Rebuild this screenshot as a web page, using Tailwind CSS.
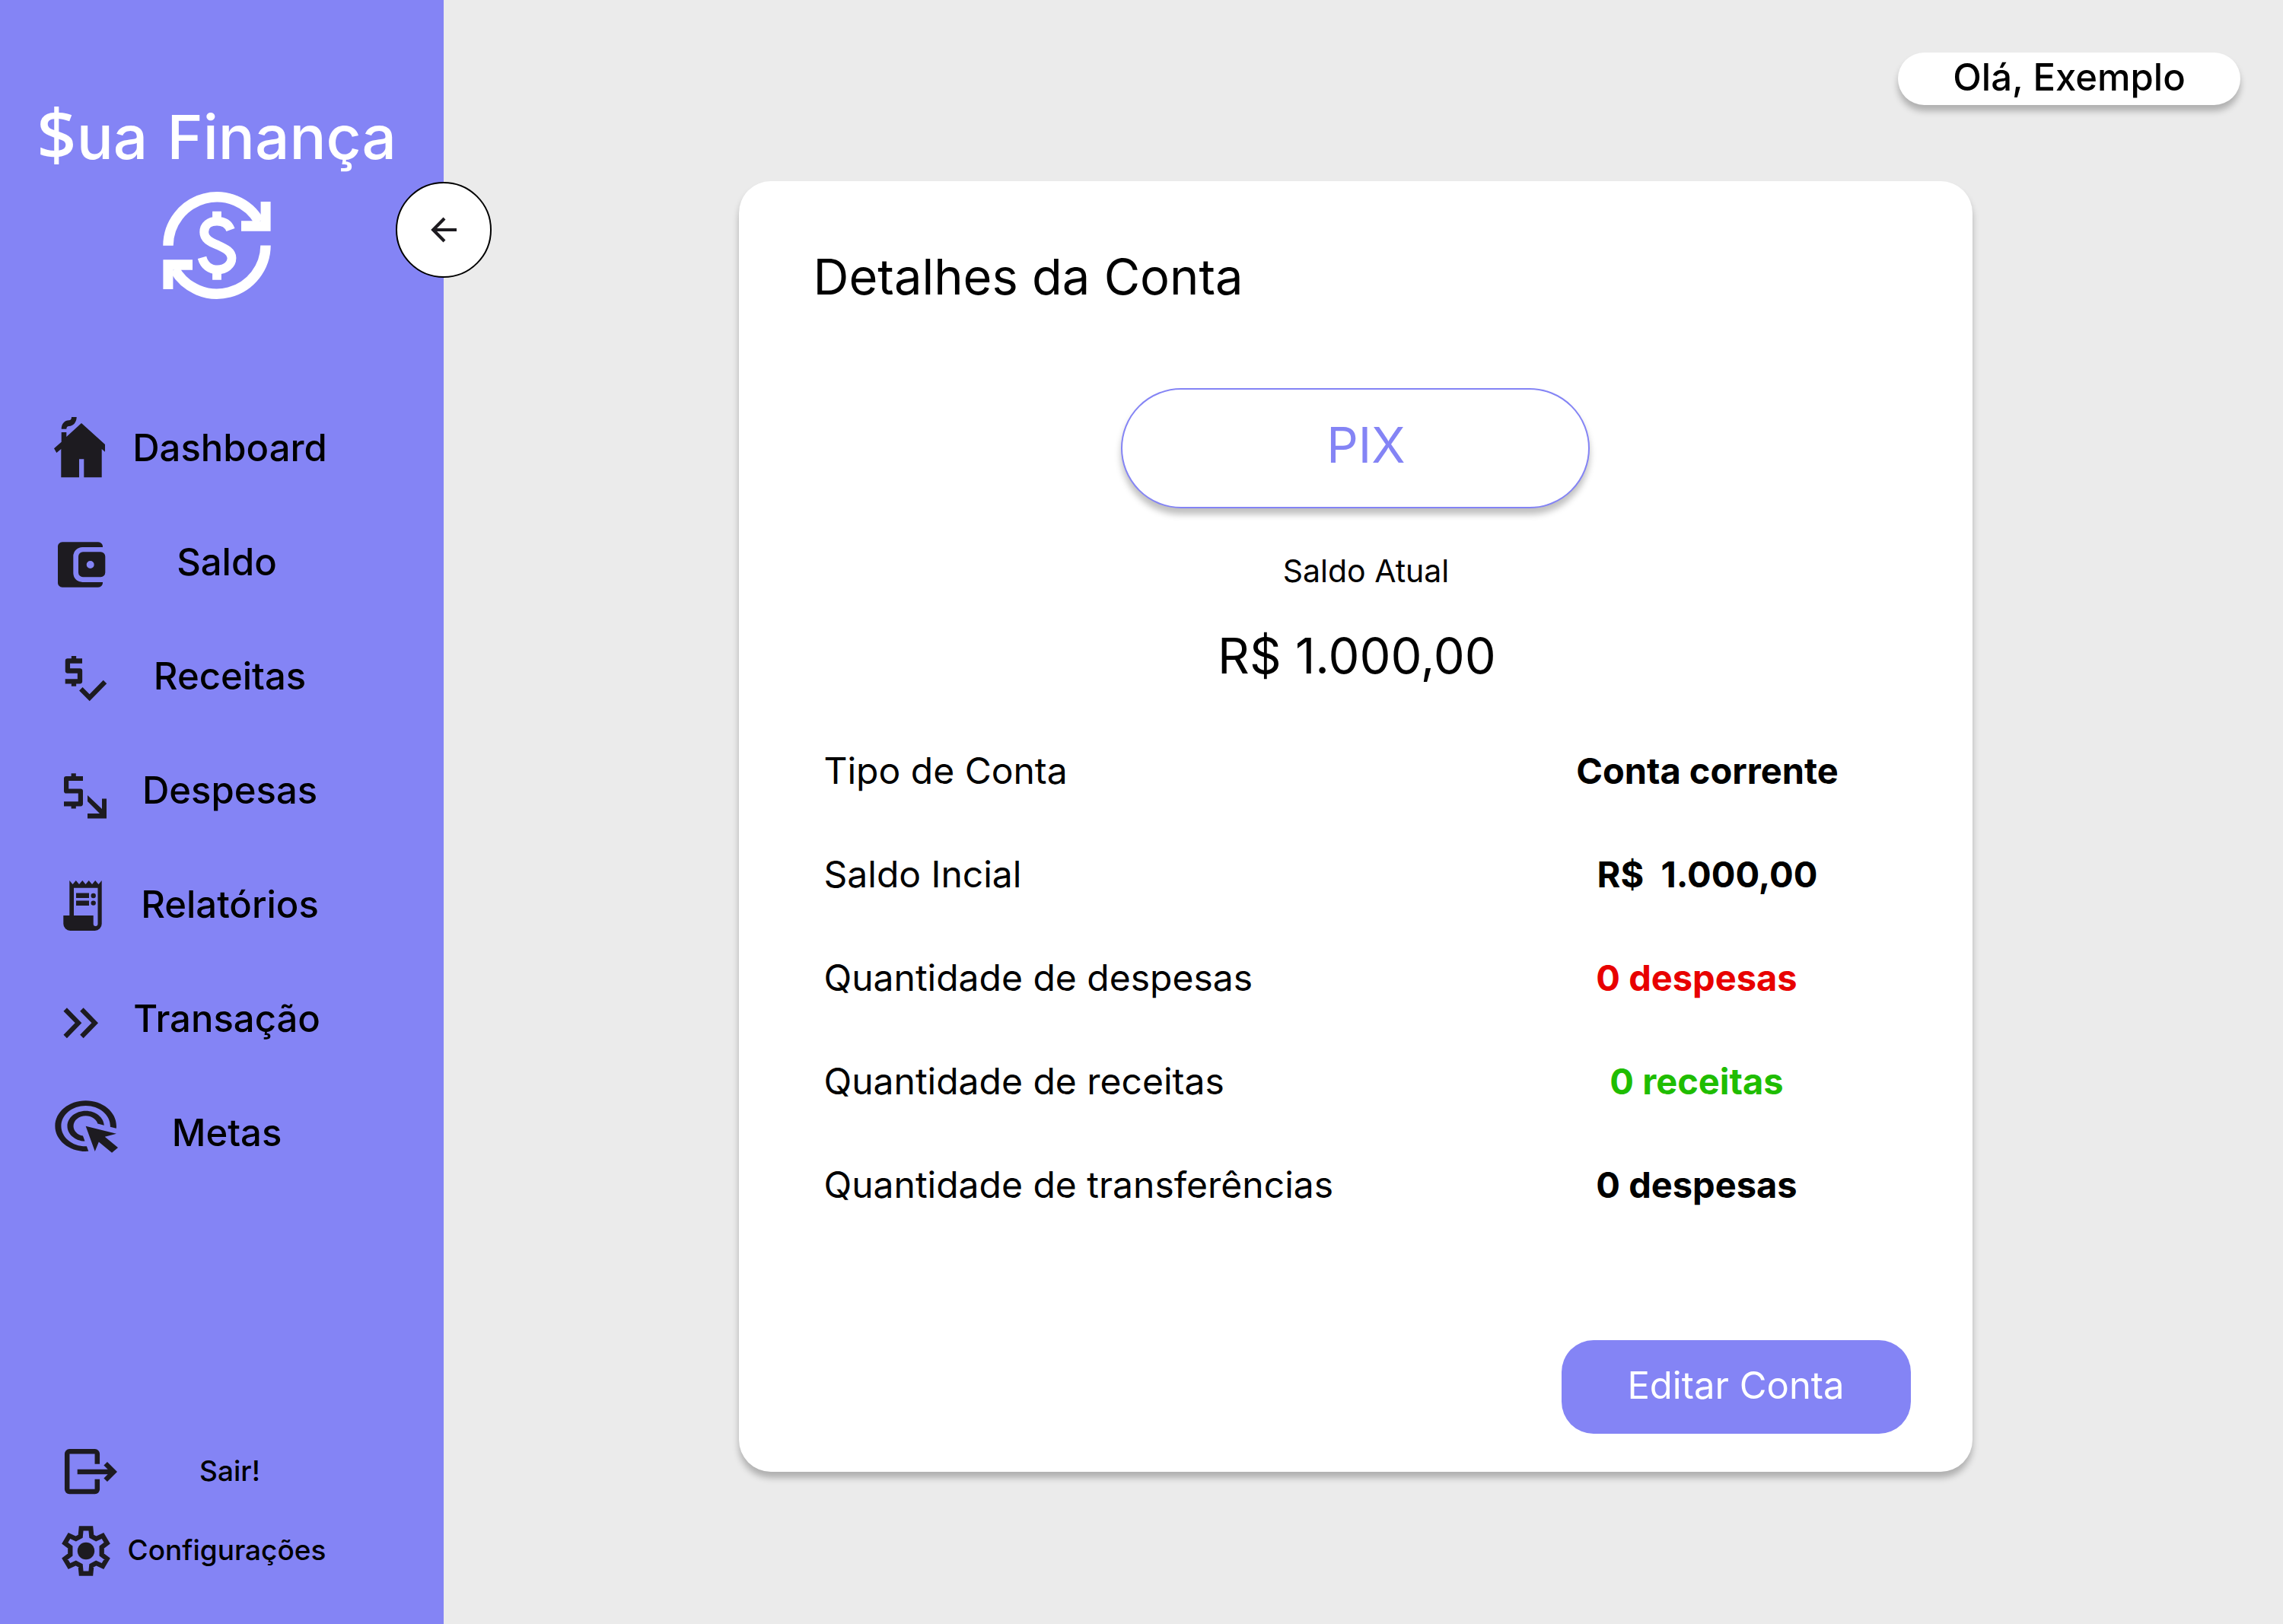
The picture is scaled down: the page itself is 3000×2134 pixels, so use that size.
<!DOCTYPE html>
<html lang="pt-BR">
<head>
<meta charset="utf-8">
<meta name="viewport" content="width=device-width, initial-scale=1">
<title>Sua Finança</title>
<script src="https://cdn.jsdelivr.net/npm/@tailwindcss/browser@4"></script>
</head>
<body class="flex min-h-screen bg-[#ebebeb] font-['Inter',sans-serif] text-black">

<aside class="relative flex w-[583px] shrink-0 flex-col bg-[#8484f5] pb-[58px] pt-[132px]">
  <div class="flex flex-col items-center pr-[14px] text-white">
    <p class="flex h-24 items-center whitespace-nowrap text-[80px] font-medium leading-[96px]"><span class="pb-2 font-['Noto_Sans',sans-serif] text-[92px] leading-[96px]">$</span><span>ua <span class="ml-1">Finança</span></span></p>
    <svg class="mt-6 size-[142px]" viewBox="0 0 142 142" fill="none" stroke="currentColor" aria-hidden="true">
      <g stroke-width="13.5"><path d="M7 70.7A64 64 0 0 1 126.5 39"/><path d="M135 70.5A64 64 0 0 1 15.5 102"/></g>
      <path d="M128.6 13h13v38.7H103V38.3h25.6zM13.4 128H.4V89.3H39v13.4H13.4z" fill="currentColor" stroke="none"/>
      <path stroke-width="11.8" d="M89 50C86 42 79 38.7 71 38.7C61 38.7 54.2 44 54.2 53C54.2 62 62 66 72 70C83 75 90.5 79 90.5 87C90.5 96 82 102.5 72 102.5C62 102.5 54.5 97 51.5 86.3M71 25.7V37M71 104V115.7"/>
    </svg>
  </div>

  <button type="button" aria-label="Recolher menu" class="absolute -right-[63px] top-[239px] flex size-[126px] items-center justify-center rounded-full border-2 border-black bg-white text-[#1d1b20]">
    <svg class="size-[34px]" viewBox="0 0 34 34" fill="none" stroke="currentColor" stroke-width="4.2" aria-hidden="true"><path d="M34 17H4M18 2L3.2 17L18 32"/></svg>
  </button>

  <nav class="mt-[149px] flex flex-col gap-[60px] pl-[68px] text-[49px] font-medium leading-[60px]">
    <a href="#" class="flex h-[90px] items-center">
      <svg class="h-[90px] w-[90px] shrink-0" viewBox="0 0 90 90" fill="#1d1b20" aria-hidden="true"><path d="M12.7 20.7C12.7 14 17 9.3 22.7 9.3C25 9.3 26 7.5 26 5H32.7C32.7 12 28 17 22.7 17C20.5 17 19.3 18.5 19.3 20.7ZM12.7 25H19.3V31L39 13L70 41V50.7L65.7 47V84.3H42.3V60.3H36V84.3H12.3V47L6.3 52L3 46.3L12.7 37.7Z"/></svg>
      <span class="w-72 pt-0.5 text-center">Dashboard</span>
    </a>
    <a href="#" class="flex h-[90px] items-center">
      <svg class="h-[90px] w-[90px] shrink-0" viewBox="0 0 90 90" fill="#1d1b20" fill-rule="evenodd" aria-hidden="true"><path d="M14 19.3H61a6 6 0 0 1 6 6.7H40.3a12 12 0 0 0-12 12v22a12 12 0 0 0 12 12H67a6 6 0 0 1-6 6.7H14a6 6 0 0 1-6-6.7V26a6 6 0 0 1 6-6.7z"/><path d="M41 32.3H64.3a6 6 0 0 1 6 6V59.3a6 6 0 0 1-6 6H41a6 6 0 0 1-6-6V38.3a6 6 0 0 1 6-6zM50.7 44a5 5 0 1 0 0 10a5 5 0 1 0 0-10z"/></svg>
      <span class="w-72 pr-2 pt-0.5 text-center">Saldo</span>
    </a>
    <a href="#" class="flex h-[90px] items-center">
      <svg class="h-[90px] w-[90px] shrink-0" viewBox="0 0 90 90" fill="none" stroke="#1d1b20" stroke-width="6.3" aria-hidden="true"><path stroke-linejoin="round" d="M40 25.5H20.9V38.5H37V52.3H17.7M29 19V25M29 53V58.7"/><path d="M38.3 62.3L49.7 73.7L70 53"/></svg>
      <span class="w-72 pt-0.5 text-center">Receitas</span>
    </a>
    <a href="#" class="flex h-[90px] items-center">
      <svg class="h-[90px] w-[90px] shrink-0" viewBox="0 0 90 90" fill="none" stroke="#1d1b20" stroke-width="6.2" aria-hidden="true"><path stroke-linejoin="round" d="M41 30H19.1V46.5H37.9V63.3H16M28.7 23.3V30M28.7 64V69.6"/><path stroke="none" fill="#1d1b20" d="M47 52L66 70V56.6h6v26H47V76H63L47 60Z"/></svg>
      <span class="w-72 pt-0.5 text-center">Despesas</span>
    </a>
    <a href="#" class="flex h-[90px] items-center">
      <svg class="h-[90px] w-[90px] shrink-0" viewBox="0 0 90 90" fill="#1d1b20" fill-rule="evenodd" aria-hidden="true"><path d="M23.3 14L27.5 19L31.8 14L36 19L40.3 14L44.5 19L48.7 14L53 19L57.2 14L61.5 19L65.7 14V71a9 9 0 0 1-9 9H24.3a9 9 0 0 1-9-9V60H23.3ZM29 23.7V60H54.7V71a2.9 2.9 0 0 0 5.8 0V23.7Z"/><path d="M32 30.5H49V37H32ZM32 40.5H49V47H32Z"/><circle cx="54.7" cy="34" r="3.2"/><circle cx="54.7" cy="43.6" r="3.2"/></svg>
      <span class="w-72 pt-0.5 text-center">Relatórios</span>
    </a>
    <a href="#" class="flex h-[90px] items-center">
      <svg class="h-[90px] w-[90px] shrink-0" viewBox="0 0 90 90" fill="none" stroke="#1d1b20" stroke-width="6.2" aria-hidden="true"><path d="M17.7 33.5L35 51.2L17.7 69M39.4 33.5L56.7 51.2L39.4 69"/></svg>
      <span class="w-72 pr-2 pt-0.5 text-center">Transação</span>
    </a>
    <a href="#" class="flex h-[90px] items-center">
      <svg class="h-[90px] w-[90px] shrink-0" viewBox="0 0 90 90" fill="#1d1b20" aria-hidden="true"><path transform="translate(-3.7 -3.3) scale(4.03 3.33)" d="M11.71 17.99C8.53 17.84 6 15.22 6 12c0-3.31 2.69-6 6-6c3.22 0 5.84 2.53 5.99 5.71l-2.1-.63C15.48 9.31 13.89 8 12 8c-2.21 0-4 1.79-4 4c0 1.89 1.31 3.48 3.08 3.89L11.71 17.99zM22 12c0 .3-.01.6-.04.9l-1.97-.59C20 12.21 20 12.1 20 12c0-4.42-3.58-8-8-8s-8 3.58-8 8s3.58 8 8 8c.1 0 .21 0 .31-.01l.59 1.97C12.6 21.99 12.3 22 12 22C6.48 22 2 17.52 2 12C2 6.48 6.48 2 12 2S22 6.48 22 12zM18.23 16.26L22 15l-10-3l3 10l1.26-3.77l4.27 4.27l1.98-1.98L18.23 16.26z"/></svg>
      <span class="w-72 pr-2 pt-0.5 text-center">Metas</span>
    </a>
  </nav>

  <div class="mt-auto flex flex-col gap-6 pl-[68px] text-[37px] font-medium leading-[48px]">
    <a href="#" class="flex h-20 items-center">
      <svg class="h-20 w-[90px] shrink-0" viewBox="0 0 90 80" fill="none" stroke="#1d1b20" stroke-width="6.5" aria-hidden="true"><path d="M59.8 31.7V18.3a3 3 0 0 0-3-3H23.2a3 3 0 0 0-3 3V65a3 3 0 0 0 3 3H56.8a3 3 0 0 0 3-3V51.7M33.7 42H80M70.7 31.3L81.4 42L70.7 52.7"/></svg>
      <span class="w-72 pt-0.5 text-center">Sair!</span>
    </a>
    <a href="#" class="flex h-20 items-center">
      <svg class="h-20 w-[90px] shrink-0" viewBox="0 0 90 80" fill="none" stroke="#1d1b20" stroke-width="6.3" aria-hidden="true"><path d="M38.7 12.3L51.3 12.3L52.3 22.7L58.3 26L67 22L72.7 31.7L65.7 37L65.7 47L72.7 52.3L67 62L58.3 58L52.3 61.3L51.3 71.7L38.7 71.7L37.7 61.3L31.7 58L23 62L17.3 52.3L24.3 47L24.3 37L17.3 31.7L23 22L31.7 26L37.7 22.7Z"/><circle cx="45" cy="42" r="11.2" fill="#1d1b20" stroke="none"/></svg>
      <span class="w-72 pr-2 pt-0.5 text-center">Configurações</span>
    </a>
  </div>
</aside>

<main class="flex min-w-0 flex-1 flex-col">
  <header class="flex justify-end pr-14 pt-[69px]">
    <button type="button" class="flex h-[69px] w-[450px] items-center justify-center rounded-full bg-white pb-1 text-[49px] font-medium leading-[60px] shadow-[0_8px_8px_rgba(0,0,0,0.25)]">Olá, Exemplo</button>
  </header>

  <div class="flex justify-center pr-[21px] pt-[100px]">
    <section class="w-full max-w-[1621px] rounded-[42px] bg-white pb-[50px] pt-[86px] shadow-[0_8px_8px_rgba(0,0,0,0.25)]">
      <h1 class="pl-[98px] text-[65px] leading-[80px]">Detalhes da Conta</h1>

      <div class="mt-[106px] flex flex-col items-center">
        <p class="flex h-[158px] w-[616px] items-center justify-center rounded-full border-2 border-[#8484f5] bg-white pb-2 pl-7 text-[65px] leading-[80px] text-[#8484f5] shadow-[0_8px_8px_rgba(0,0,0,0.25)]">PIX</p>
        <p class="mt-[58px] pl-7 text-[41px] leading-[48px]">Saldo Atual</p>
        <p class="mt-12 pl-1 text-[65px] leading-[80px]">R$ 1.000,00</p>
      </div>

      <dl class="mt-[79px] flex flex-col gap-[72px] pl-[112px] pr-[98px] text-[48px] leading-[64px]">
        <div class="flex justify-between"><dt>Tipo de Conta</dt><dd class="w-[500px] text-center text-[47px] font-bold">Conta corrente</dd></div>
        <div class="flex justify-between"><dt>Saldo Incial</dt><dd class="w-[500px] text-center text-[47px] font-bold">R$&nbsp; 1.000,00</dd></div>
        <div class="flex justify-between"><dt>Quantidade de despesas</dt><dd class="w-[500px] pr-7 text-center text-[47px] font-bold text-[#e80000]">0 despesas</dd></div>
        <div class="flex justify-between"><dt>Quantidade de receitas</dt><dd class="w-[500px] pr-7 text-center text-[47px] font-bold text-[#1fbd00]">0 receitas</dd></div>
        <div class="flex justify-between"><dt>Quantidade de transferências</dt><dd class="w-[500px] pr-7 text-center text-[47px] font-bold">0 despesas</dd></div>
      </dl>

      <div class="mt-[172px] flex justify-end pr-[81px]">
        <button type="button" class="h-[123px] w-[459px] rounded-[42px] bg-[#8484f5] pb-1 text-[49px] leading-[60px] text-white">Editar Conta</button>
      </div>
    </section>
  </div>
</main>

</body>
</html>
